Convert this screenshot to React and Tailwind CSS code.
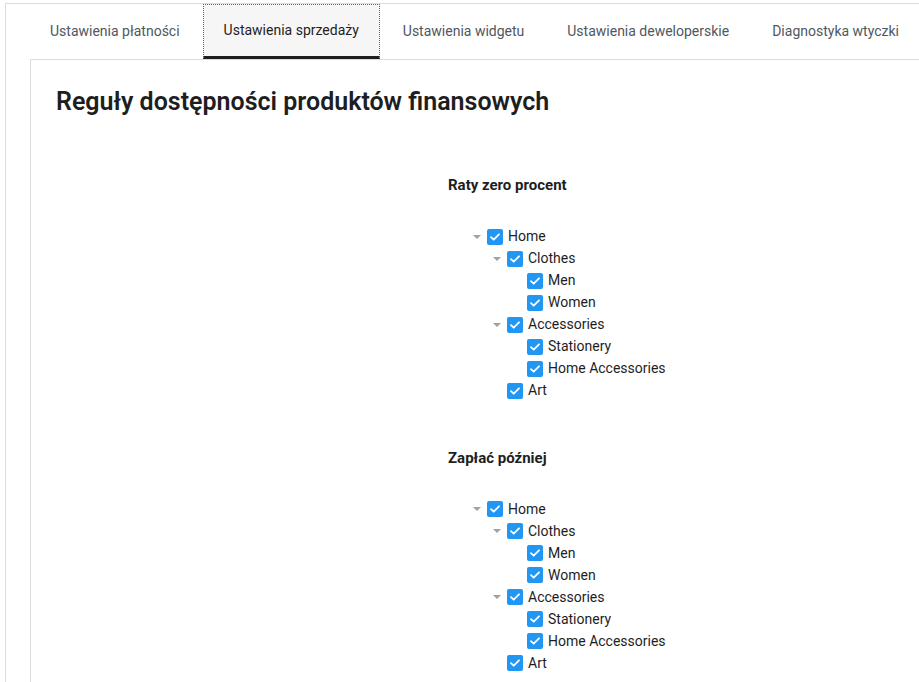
import { useState } from 'react'

const tabs = [
  'Ustawienia płatności',
  'Ustawienia sprzedaży',
  'Ustawienia widgetu',
  'Ustawienia deweloperskie',
  'Diagnostyka wtyczki',
]

const tree = [
  {
    label: 'Home',
    children: [
      { label: 'Clothes', children: [{ label: 'Men' }, { label: 'Women' }] },
      { label: 'Accessories', children: [{ label: 'Stationery' }, { label: 'Home Accessories' }] },
      { label: 'Art' },
    ],
  },
]

function Checkbox() {
  return (
    <span className="flex h-4 w-4 shrink-0 items-center justify-center rounded-[2px] bg-[#2196f3]">
      <svg width="10" height="8" viewBox="0 0 10 8" fill="none">
        <path d="M1 4.2 3.7 6.7 9 1.3" stroke="white" strokeWidth="1.8" strokeLinecap="round" strokeLinejoin="round" />
      </svg>
    </span>
  )
}

function TreeNode({ node }) {
  const hasChildren = node.children && node.children.length > 0
  return (
    <li>
      <div className="flex h-[22px] items-center">
        <span className="flex w-5 shrink-0 items-center justify-center">
          {hasChildren && (
            <svg width="8" height="4" viewBox="0 0 8 4">
              <path d="M0 0h8L4 4z" fill="#a0a0a0" />
            </svg>
          )}
        </span>
        <Checkbox />
        <span className="ml-[5px] text-[14px] text-[#1e1e1e]">{node.label}</span>
      </div>
      {hasChildren && (
        <ul className="pl-5">
          {node.children.map((c) => (
            <TreeNode key={c.label} node={c} />
          ))}
        </ul>
      )}
    </li>
  )
}

function Section({ title }) {
  return (
    <div>
      <h3 className="text-[15px] font-bold text-[#1e1e1e]">{title}</h3>
      <ul className="mt-[29px] pl-[19px]">
        {tree.map((n) => (
          <TreeNode key={n.label} node={n} />
        ))}
      </ul>
    </div>
  )
}

export default function App() {
  const [active, setActive] = useState(1)

  return (
    <div className="min-h-[682px] bg-white pl-[5px] pt-[3px] font-['Roboto',sans-serif]">
      <div className="min-h-[679px] border-l border-t border-[#dcdcde]">
        {/* Tabs */}
        <div className="flex h-[55px] items-stretch gap-[3px] pl-[24px]">
          {tabs.map((t, i) => (
            <button
              key={t}
              onClick={() => setActive(i)}
              className={`px-5 text-[14px] ${
                active === i
                  ? 'border-x border-t border-dotted border-[#666] border-b-[3px] border-b-[#1e1e1e] bg-[#f6f6f6] text-[#1e1e1e]'
                  : 'text-[#50575e]'
              }`}
              style={active === i ? { borderBottomStyle: 'solid' } : undefined}
            >
              {t}
            </button>
          ))}
        </div>

        {/* Content */}
        <div className="ml-[24px] min-h-[624px] border-l border-t border-[#dcdcde] pl-[25px] pt-[27px]">
          <h2 className="text-[25px] font-semibold leading-[30px] text-[#1e1e1e]">
            Reguły dostępności produktów finansowych
          </h2>
          <div className="ml-[392px] mt-[57px] flex flex-col gap-[45px]">
            <Section title="Raty zero procent" />
            <Section title="Zapłać później" />
          </div>
        </div>
      </div>
    </div>
  )
}
